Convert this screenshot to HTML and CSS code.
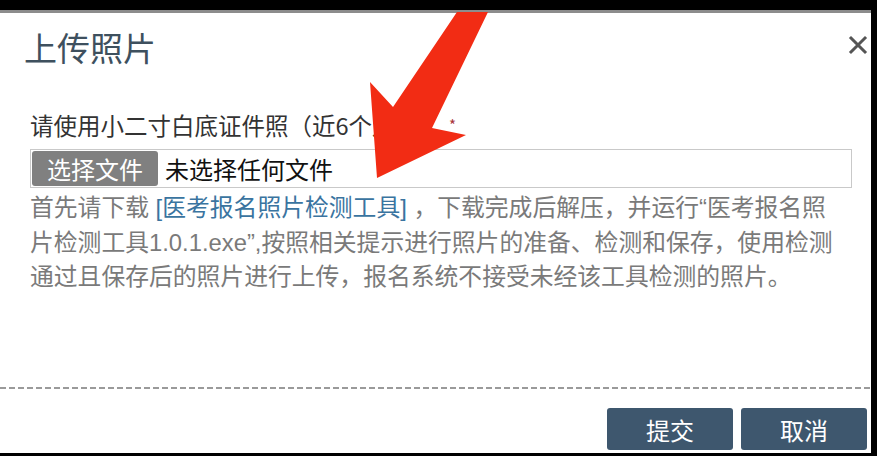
FILE: index.html
```html
<!DOCTYPE html>
<html lang="zh-CN">
<head>
<meta charset="utf-8">
<title>上传照片</title>
<link rel="stylesheet" href="styles.css">
</head>
<body>
<div class="modal">
  <div class="modal-header">
    <h2 class="modal-title">上传照片</h2>
    <button class="close" type="button" aria-label="关闭">
      <svg viewBox="0 0 20 20" width="20" height="20"><path d="M3 3 L17 17 M17 3 L3 17" stroke="#555" stroke-width="3" stroke-linecap="square"/></svg>
    </button>
  </div>
  <div class="modal-body">
    <label class="field-label">请使用小二寸白底证件照（近6个月）<span class="required">*</span></label>
    <div class="file-input">
      <span class="file-btn">选择文件</span>
      <span class="file-name">未选择任何文件</span>
    </div>
    <p class="help">首先请下载 <a class="tool-link">[医考报名照片检测工具]</a> ，下载完成后解压，并运行“医考报名照片检测工具1.0.1.exe”,按照相关提示进行照片的准备、检测和保存，使用检测通过且保存后的照片进行上传，报名系统不接受未经该工具检测的照片。</p>
  </div>
  <div class="modal-footer">
    <button class="btn" type="button">提交</button>
    <button class="btn" type="button">取消</button>
  </div>
</div>
<svg class="pointer-arrow" width="877" height="456" viewBox="0 0 877 456">
  <polygon points="457,12 488,12 432,128 466,135 377,178 370,82 393,107" fill="#f22c14"/>
</svg>
</body>
</html>
```
FILE: styles.css
```css
html, body {
  margin: 0;
  padding: 0;
}

body {
  width: 877px;
  height: 456px;
  background: #000;
  position: relative;
  overflow: hidden;
  font-family: "Noto Sans CJK SC", "Noto Sans", sans-serif;
}

.modal {
  margin-top: 10px;
  width: 871px;
  height: 440px;
  border-top: 3px solid #8c8c8c;
  background: #fff;
  display: flex;
  flex-direction: column;
}

.modal-header {
  display: flex;
  justify-content: space-between;
  align-items: flex-start;
  padding: 14px 3px 0 24px;
}

.modal-title {
  margin: 0;
  font-size: 33px;
  line-height: 40px;
  font-weight: 400;
  color: #3e505e;
}

.close {
  margin-top: 8px;
  padding: 0;
  border: 0;
  background: none;
  width: 20px;
  height: 20px;
  display: flex;
}

.modal-body {
  padding: 0 19px 0 30px;
}

.field-label {
  display: block;
  margin-top: 43px;
  font-size: 23.5px;
  line-height: 30px;
  color: #333;
}

.required {
  margin-left: 30px;
  font-size: 15px;
  color: #a8343a;
  vertical-align: 4px;
}

.file-input {
  margin-top: 9px;
  height: 37px;
  border: 1px solid #c9c9c9;
  display: flex;
  align-items: center;
}

.file-btn {
  margin-left: 1px;
  width: 126px;
  height: 35px;
  box-sizing: border-box;
  background: #808080;
  border-radius: 3px;
  color: #fff;
  font-size: 24px;
  line-height: 35px;
  text-align: center;
}

.file-name {
  padding-left: 7px;
  font-size: 24px;
  color: #111;
}

.help {
  margin: 3px 0 0;
  max-width: 812px;
  font-family: "Liberation Sans", "Noto Sans CJK SC", sans-serif;
  font-size: 23.8px;
  line-height: 34.5px;
  color: #7a7a7a;
}

.tool-link {
  color: #3a74a0;
}

.modal-footer {
  margin-top: auto;
  padding: 21px 4px 3px 0;
  display: flex;
  justify-content: flex-end;
  gap: 8px;
  background: repeating-linear-gradient(90deg, #9a9a9a 0 6px, transparent 6px 9px) top left / 100% 2px no-repeat;
}

.btn {
  width: 126px;
  height: 42px;
  border: 0;
  border-radius: 3px;
  background: #3e576e;
  color: #fff;
  font-family: inherit;
  font-size: 24px;
  padding: 0;
}

.pointer-arrow {
  position: absolute;
  top: 0;
  left: 0;
  pointer-events: none;
}
```
